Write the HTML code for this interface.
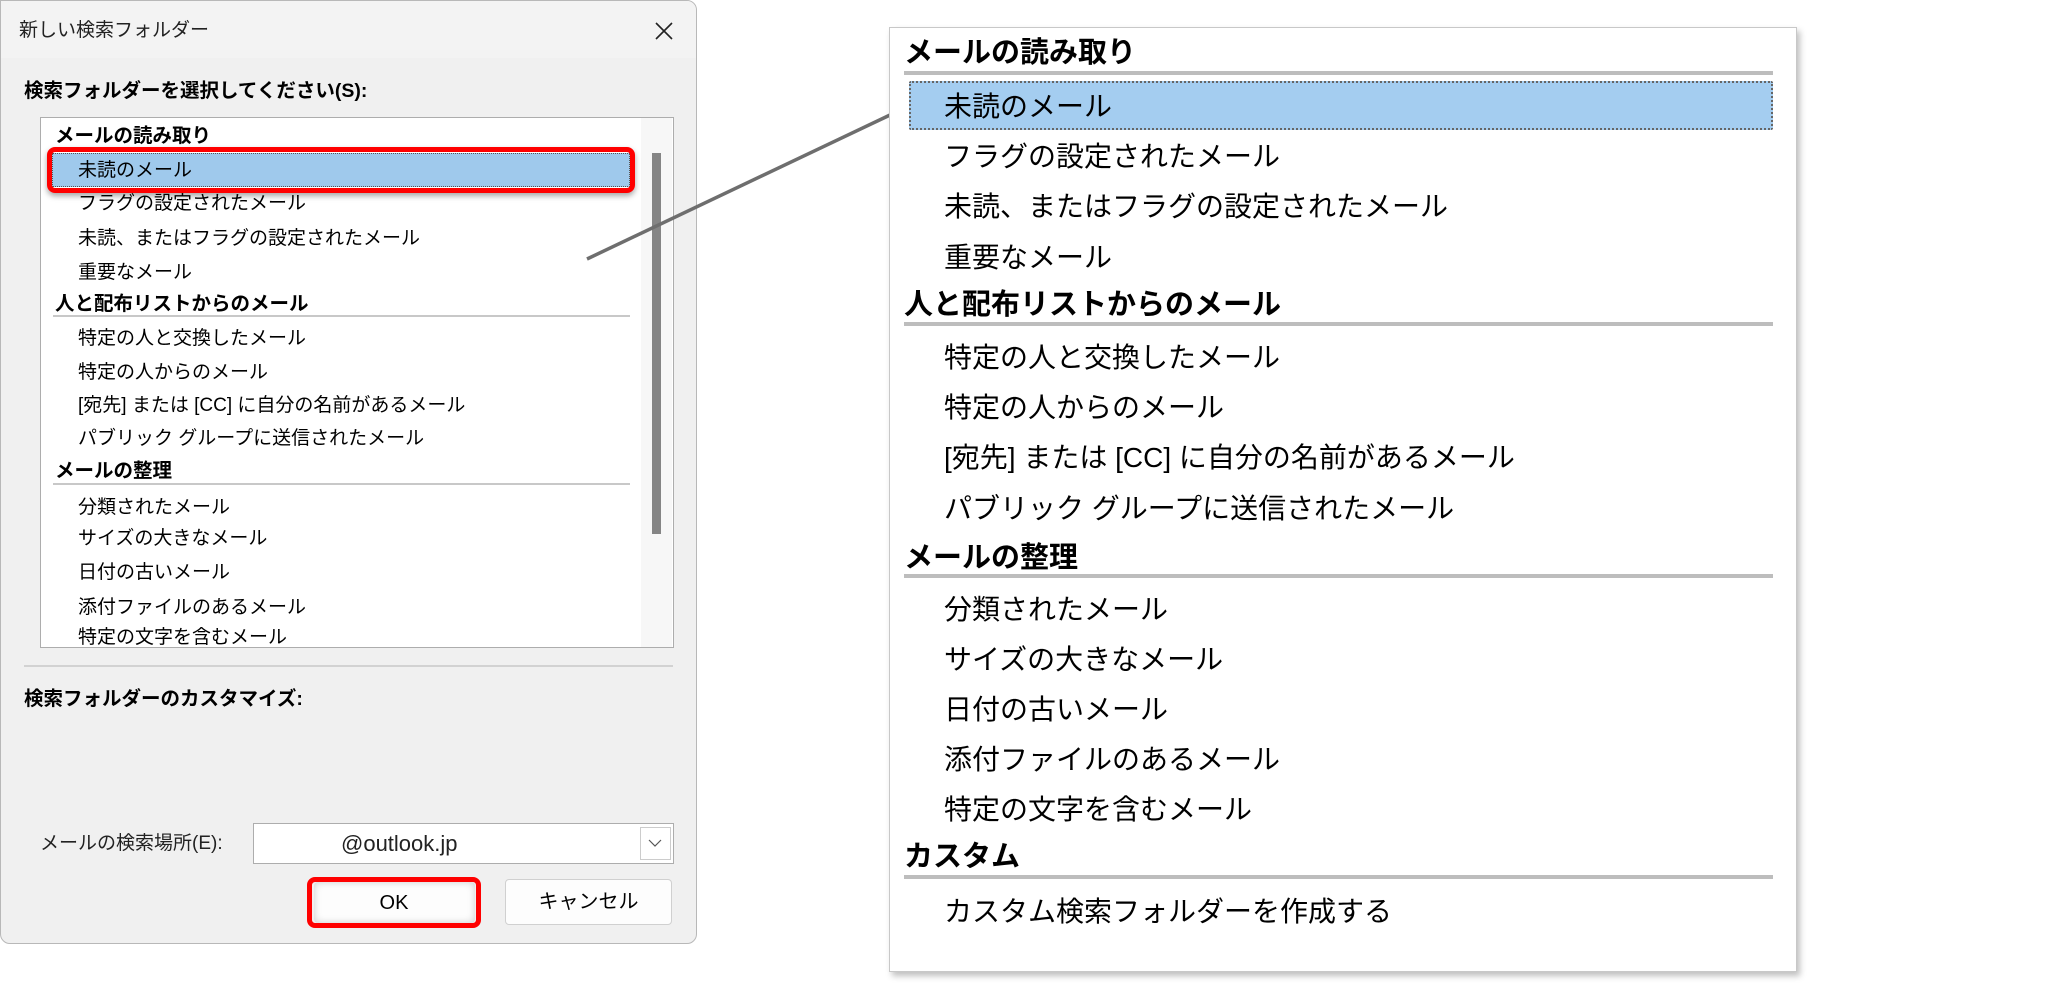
<!DOCTYPE html>
<html><head><meta charset="utf-8"><style>
*{margin:0;padding:0;box-sizing:border-box}
body{width:2048px;height:986px;background:#fff;position:relative;overflow:hidden;font-family:"Liberation Sans","Noto Sans CJK JP",sans-serif;color:#000}
.a{position:absolute;white-space:nowrap}
.dlg{position:absolute;left:0;top:0;width:697px;height:944px;background:#f0f0f0;border:1px solid #b8b8b8;border-radius:0 10px 10px 10px;overflow:hidden}
.lt{font-size:19px;line-height:26px}
.lh{font-size:19.5px;line-height:26px;font-weight:bold}
.rt{font-size:28px;line-height:40px}
.rh{font-size:29px;line-height:40px;font-weight:bold}
</style></head><body>
<div class="dlg">
  <div class="a" style="left:0;top:0;width:697px;height:57px;background:#f3f3f3"></div>
  <div class="a" style="left:18px;top:17px;font-size:19px;line-height:26px;color:#222">新しい検索フォルダー</div>
  <svg class="a" style="left:654px;top:21px" width="18" height="18"><path d="M1 1L17 17M17 1L1 17" stroke="#222" stroke-width="1.6"/></svg>
  <div class="a lh" style="left:23px;top:77px">検索フォルダーを選択してください(S):</div>
  <div class="a" style="left:39px;top:116px;width:634px;height:531px;background:#fff;border:1px solid #adadad"></div>
  <div class="a" style="left:640px;top:117px;width:31px;height:529px;background:#f7f7f7"></div>
  <div class="a" style="left:651px;top:152px;width:9px;height:381px;background:#858585"></div>
  <div class="a lh" style="left:54px;top:122px">メールの読み取り</div>
  <div class="a" style="left:51px;top:152px;width:578px;height:34px;background:#9fc9ec;border:1px dotted #555"></div>
  <div class="a" style="left:46px;top:146px;width:588px;height:46px;border:5px solid #f00;border-radius:8px;box-shadow:0 3px 6px rgba(0,0,0,.35)"></div>
  <div class="a lt" style="left:77px;top:157px">未読のメール</div>
  <div class="a lt" style="left:77px;top:190px">フラグの設定されたメール</div>
  <div class="a lt" style="left:77px;top:225px">未読、またはフラグの設定されたメール</div>
  <div class="a lt" style="left:77px;top:259px">重要なメール</div>
  <div class="a lh" style="left:54px;top:290px">人と配布リストからのメール</div>
  <div class="a" style="left:52px;top:314px;width:577px;height:2px;background:#c8c8c8"></div>
  <div class="a lt" style="left:77px;top:325px">特定の人と交換したメール</div>
  <div class="a lt" style="left:77px;top:359px">特定の人からのメール</div>
  <div class="a lt" style="left:77px;top:392px">[宛先] または [CC] に自分の名前があるメール</div>
  <div class="a lt" style="left:77px;top:425px">パブリック グループに送信されたメール</div>
  <div class="a lh" style="left:54px;top:457px">メールの整理</div>
  <div class="a" style="left:52px;top:482px;width:577px;height:2px;background:#c8c8c8"></div>
  <div class="a lt" style="left:77px;top:494px">分類されたメール</div>
  <div class="a lt" style="left:77px;top:525px">サイズの大きなメール</div>
  <div class="a lt" style="left:77px;top:559px">日付の古いメール</div>
  <div class="a lt" style="left:77px;top:594px">添付ファイルのあるメール</div>
  <div class="a" style="left:40px;top:620px;width:600px;height:26px;overflow:hidden"><div class="a lt" style="left:37px;top:4px">特定の文字を含むメール</div></div>
  <div class="a" style="left:23px;top:664px;width:649px;height:2px;background:#d2d2d2"></div>
  <div class="a lh" style="left:23px;top:685px">検索フォルダーのカスタマイズ:</div>
  <div class="a" style="left:39px;top:830px;font-size:19px;line-height:26px;color:#222">メールの検索場所(E):</div>
  <div class="a" style="left:252px;top:822px;width:421px;height:41px;background:#fff;border:1px solid #adadad"></div>
  <div class="a" style="left:639px;top:826px;width:31px;height:33px;background:#fff;border:1px solid #ccc"></div>
  <svg class="a" style="left:647px;top:837px" width="14" height="10"><path d="M1 2L7 8L13 2" stroke="#555" fill="none" stroke-width="1.2"/></svg>
  <div class="a" style="left:340px;top:829px;font-size:22px;line-height:28px;color:#222">@outlook.jp</div>
  <div class="a" style="left:313px;top:881px;width:161px;height:41px;background:#fdfdfd;border-radius:4px;box-shadow:inset 0 0 8px rgba(0,0,0,.2)"></div>
  <div class="a" style="left:306px;top:876px;width:174px;height:51px;border:5px solid #f00;border-radius:8px"></div>
  <div class="a" style="left:306px;top:889px;width:174px;text-align:center;font-size:20px;line-height:26px">OK</div>
  <div class="a" style="left:504px;top:878px;width:167px;height:46px;background:#fdfdfd;border:1px solid #d0d0d0;border-radius:4px;text-align:center;font-size:20px;line-height:44px">キャンセル</div>
</div>
<svg class="a" style="left:0;top:0" width="2048" height="986"><path d="M587 259L890 115" stroke="#6e6e6e" stroke-width="3.5"/></svg>
<div class="a" style="left:889px;top:27px;width:908px;height:945px;background:#fff;border:1px solid #c8c8c8;box-shadow:3px 4px 6px rgba(0,0,0,.25)"></div>
<div class="a rh" style="left:904px;top:33px">メールの読み取り</div>
<div class="a" style="left:904px;top:71px;width:869px;height:4px;background:#bdbdbd"></div>
<div class="a" style="left:909px;top:81px;width:864px;height:49px;background:#a4cdf0;border:2px dotted #666;border-radius:2px"></div>
<div class="a rt" style="left:944px;top:87px">未読のメール</div>
<div class="a rt" style="left:944px;top:137px">フラグの設定されたメール</div>
<div class="a rt" style="left:944px;top:187px">未読、またはフラグの設定されたメール</div>
<div class="a rt" style="left:944px;top:238px">重要なメール</div>
<div class="a rh" style="left:904px;top:285px">人と配布リストからのメール</div>
<div class="a" style="left:904px;top:322px;width:869px;height:4px;background:#bdbdbd"></div>
<div class="a rt" style="left:944px;top:338px">特定の人と交換したメール</div>
<div class="a rt" style="left:944px;top:388px">特定の人からのメール</div>
<div class="a rt" style="left:944px;top:438px">[宛先] または [CC] に自分の名前があるメール</div>
<div class="a rt" style="left:944px;top:489px">パブリック グループに送信されたメール</div>
<div class="a rh" style="left:904px;top:538px">メールの整理</div>
<div class="a" style="left:904px;top:574px;width:869px;height:4px;background:#bdbdbd"></div>
<div class="a rt" style="left:944px;top:590px">分類されたメール</div>
<div class="a rt" style="left:944px;top:640px">サイズの大きなメール</div>
<div class="a rt" style="left:944px;top:690px">日付の古いメール</div>
<div class="a rt" style="left:944px;top:740px">添付ファイルのあるメール</div>
<div class="a rt" style="left:944px;top:790px">特定の文字を含むメール</div>
<div class="a rh" style="left:904px;top:837px">カスタム</div>
<div class="a" style="left:904px;top:875px;width:869px;height:4px;background:#bdbdbd"></div>
<div class="a rt" style="left:944px;top:892px">カスタム検索フォルダーを作成する</div>
</body></html>
